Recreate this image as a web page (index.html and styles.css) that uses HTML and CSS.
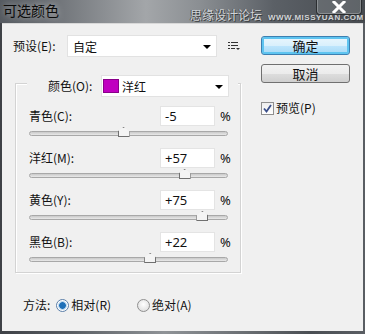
FILE: index.html
```html
<!DOCTYPE html>
<html lang="zh-CN">
<head>
<meta charset="utf-8">
<title>可选颜色</title>
<link rel="stylesheet" href="styles.css">
</head>
<body>
<div class="window">
  <div class="titlebar">
    <span class="title">可选颜色</span>
    <span class="close"><svg width="16" height="12" viewBox="0 0 16 12"><path d="M3 1 L13 11 M13 1 L3 11" stroke="#fff" stroke-width="3" stroke-linecap="square"/></svg></span>
    <span class="watermark"><span class="wm-cn">思缘设计论坛</span><span class="wm-en">WWW.MISSYUAN.COM</span></span>
  </div>
  <div class="client">
    <div class="left">
      <div class="preset-row">
        <span class="lbl">预设(E):</span>
        <div class="combo preset-combo"><span>自定</span><span class="arrow"></span></div>
        <svg class="menu-icon" width="13" height="10" viewBox="0 0 13 10">
          <rect x="0" y="1" width="2" height="1" fill="#333"/><rect x="3" y="1" width="7" height="1" fill="#333"/>
          <rect x="0" y="4" width="2" height="1" fill="#333"/><rect x="3" y="4" width="7" height="1" fill="#333"/>
          <rect x="0" y="7" width="2" height="1" fill="#333"/><rect x="3" y="7" width="4" height="1" fill="#333"/>
          <path d="M8 7 L12 7 L10 9 Z" fill="#333"/>
        </svg>
      </div>
      <div class="group">
        <div class="group-head">
          <span class="lbl">颜色(O):</span>
          <div class="combo color-combo"><span class="swatch"></span><span>洋红</span><span class="arrow"></span></div>
        </div>
        <div class="rows">
          <div class="row">
            <div class="row-top"><span class="lbl">青色(C):</span><span class="field">-5</span><span class="pct">%</span></div>
            <div class="slider"><span class="thumb" style="left:47.5%"></span></div>
          </div>
          <div class="row">
            <div class="row-top"><span class="lbl">洋红(M):</span><span class="field">+57</span><span class="pct">%</span></div>
            <div class="slider"><span class="thumb" style="left:78.5%"></span></div>
          </div>
          <div class="row">
            <div class="row-top"><span class="lbl">黄色(Y):</span><span class="field">+75</span><span class="pct">%</span></div>
            <div class="slider"><span class="thumb" style="left:87.5%"></span></div>
          </div>
          <div class="row">
            <div class="row-top"><span class="lbl">黑色(B):</span><span class="field">+22</span><span class="pct">%</span></div>
            <div class="slider"><span class="thumb" style="left:61%"></span></div>
          </div>
        </div>
      </div>
      <div class="method">
        <span class="lbl">方法:</span>
        <span class="radio checked"></span><span class="lbl">相对(R)</span>
        <span class="radio second"></span><span class="lbl">绝对(A)</span>
      </div>
    </div>
    <div class="right">
      <div class="btn primary">确定</div>
      <div class="btn">取消</div>
      <div class="check-row"><span class="checkbox"><svg width="11" height="11" viewBox="0 0 11 11"><path d="M2 5.5 L4.5 8.5 L9 2" stroke="#3a4f8a" stroke-width="1.8" fill="none"/></svg></span><span class="lbl">预览(P)</span></div>
    </div>
  </div>
</div>
</body>
</html>
```
FILE: styles.css
```css
* { box-sizing: border-box; }
html, body { margin: 0; padding: 0; }
body {
  width: 365px; height: 334px; overflow: hidden;
  font-family: "Noto Sans CJK SC", "Noto Sans", sans-serif;
  font-size: 12px; color: #111;
}
.window {
  width: 365px; height: 334px;
  background: linear-gradient(90deg, #3e4146 0%, #5c6065 20%, #8f9397 45%, #6e7276 65%, #4a4e53 85%, #5a5e63 100%);
  display: flex; flex-direction: column;
}
.titlebar {
  height: 23px; position: relative; flex: none; z-index: 2;
  background: linear-gradient(90deg, #555a60 0%, #6f7378 15%, #a3a6a9 40%, #8a8e92 55%, #5b6066 75%, #474b50 100%);
}
.title {
  position: absolute; left: 3px; top: 1px;
  font-size: 14px; line-height: 18px; color: #0a0a0a;
  text-shadow: 0 0 6px rgba(255,255,255,0.6);
}
.watermark {
  position: absolute; left: 190px; top: 7px; white-space: nowrap; z-index: 3;
  display: flex; align-items: baseline; gap: 6px;
  color: #cfd3d7; text-shadow: 1px 1px 0 #3c3f42, -1px 0 0 #555;
}
.wm-cn { font-size: 12px; line-height: 16px; flex: none; }
.wm-en { font-family: "Liberation Sans", sans-serif; font-size: 8px; font-weight: bold; letter-spacing: 0.5px; flex: none; }
.close {
  position: absolute; left: 316px; top: -3px; width: 46px; height: 18px;
  border: 1px solid #2b2e31; border-top: none; border-radius: 0 0 4px 4px;
  background: rgba(140,145,150,0.35);
  box-shadow: inset 0 0 0 1px rgba(255,255,255,0.25);
  display: flex; align-items: center; justify-content: center; padding-top: 3px;
}
.client {
  flex: 1; margin: 0 2px 3px 2px;
  background: #f0f0f0;
  border-top: 1px solid #d8d8d8;
  display: flex;
}
.left { width: 246px; flex: none; padding: 11px 0 0 11px; }
.right { flex: 1; padding: 12px 0 0 13px; display: flex; flex-direction: column; }
.lbl { white-space: nowrap; line-height: 16px; }
.preset-row { display: flex; align-items: center; height: 22px; }
.preset-row .lbl { width: 54px; }
.combo {
  background: #fff; border: 1px solid #e2e2e2; height: 22px;
  display: flex; align-items: center; padding-left: 5px; position: relative;
}
.arrow {
  position: absolute; right: 5px; top: 9px; width: 0; height: 0;
  border-left: 4px solid transparent; border-right: 4px solid transparent; border-top: 4px solid #000;
}
.preset-combo { width: 150px; }
.menu-icon { margin-left: 11px; }
.group {
  margin: 26px 0 0 2px; width: 226px; height: 190px;
  border: 1px solid #d3d3d3; box-shadow: 1px 1px 0 #fff inset, 1px 1px 0 #fff;
}
.group-head {
  display: flex; align-items: center; margin: -9px 0 0 11px; width: 211px;
  background: #f0f0f0; padding: 0 8px 0 21px; height: 22px;
}
.group-head .lbl { width: 53px; }
.color-combo { width: 128px; padding-left: 1px; }
.swatch { width: 16px; height: 14px; background: #c000c0; border: 1px solid #8a008a; margin-right: 3px; }
.rows { padding: 9px 0 0 13px; }
.row { height: 42px; }
.row-top { display: flex; align-items: center; height: 20px; }
.row-top .lbl { width: 131px; }
.field {
  width: 55px; height: 20px; background: #fff; border: 1px solid #e4e4e4;
  padding-left: 4px; line-height: 18px; font-size: 13px;
  font-family: "Noto Sans", sans-serif;
}
.pct { margin-left: 5px; font-family: "Noto Sans", sans-serif; font-size: 13px; }
.slider {
  margin-top: 5px; width: 199px; height: 5px; position: relative;
  border: 1px solid #a8a8a8; border-radius: 3px;
  background: linear-gradient(#c9c9c9, #e9e9e9);
}
.thumb {
  position: absolute; top: -5px; width: 12px; height: 10px; margin-left: -6px;
  background: #f4f4f4; border: 1px solid #707070;
  clip-path: polygon(50% 0, 100% 45%, 100% 100%, 0 100%, 0 45%);
}
.method { display: flex; align-items: center; margin: 24px 0 0 10px; }
.method .lbl:first-child { margin-right: 6px; }
.radio {
  width: 13px; height: 13px; border-radius: 50%; border: 1px solid #8f8f8f;
  background: radial-gradient(circle at 50% 40%, #fff, #d8d8d8);
  margin-right: 2px;
}
.radio.checked { background: radial-gradient(circle, #1e6fb8 0 3px, #9cc4e6 3.5px, #fff 5px); border-color: #5a7ea8; }
.radio.second { margin-left: 26px; }
.btn {
  width: 89px; height: 19px; border: 1px solid #707070; border-radius: 3px;
  background: linear-gradient(#f2f2f2 0%, #ebebeb 50%, #dddddd 51%, #cfcfcf 100%);
  display: flex; align-items: center; justify-content: center;
  font-size: 13px; margin-bottom: 9px;
}
.btn.primary {
  border-color: #3c7fb1;
  background: linear-gradient(#eaf6fd 0%, #d9f0fc 50%, #bee6fd 51%, #a7d9f5 100%);
  box-shadow: inset 0 0 0 2px #5ec4f0;
}
.check-row { display: flex; align-items: center; margin-top: 8px; }
.checkbox {
  width: 13px; height: 13px; border: 1px solid #8f8f8f; background: linear-gradient(#eee, #fff);
  display: flex; align-items: center; justify-content: center; margin-right: 2px;
}
```
